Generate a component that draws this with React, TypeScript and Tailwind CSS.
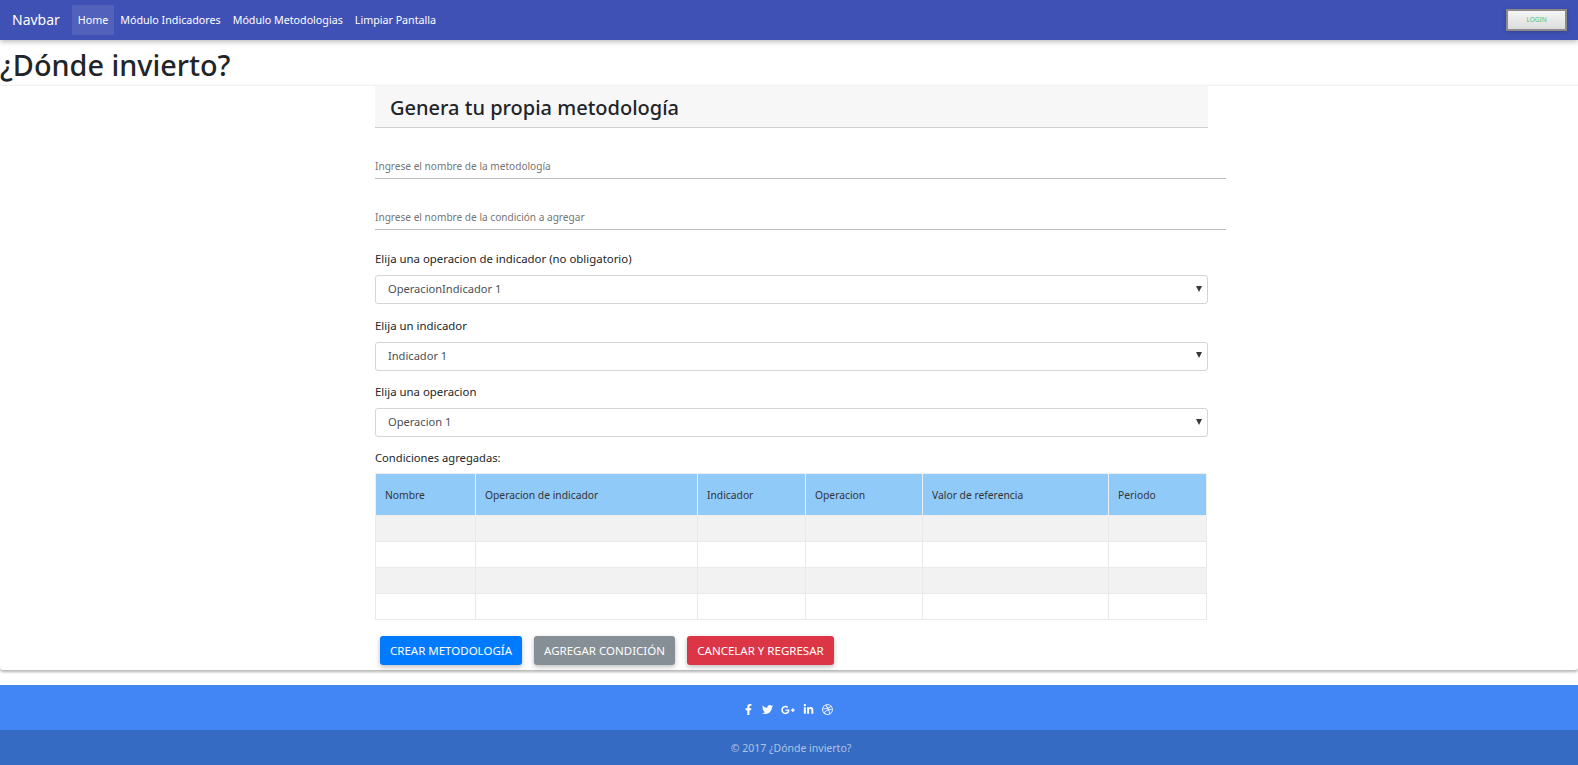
import { FaDribbble, FaFacebookF, FaGooglePlusG, FaLinkedinIn, FaTwitter } from 'react-icons/fa';

const columns = [
  { name: 'Nombre', width: 'w-[100px]' },
  { name: 'Operacion de indicador', width: 'w-[222px]' },
  { name: 'Indicador', width: 'w-[108px]' },
  { name: 'Operacion', width: 'w-[117px]' },
  { name: 'Valor de referencia', width: 'w-[186px]' },
  { name: 'Periodo', width: 'w-[98px]' },
];

const selects = [
  { label: 'Elija una operacion de indicador (no obligatorio)', value: 'OperacionIndicador 1' },
  { label: 'Elija un indicador', value: 'Indicador 1' },
  { label: 'Elija una operacion', value: 'Operacion 1' },
];

function Select({ label, value }: { label: string; value: string }) {
  return (
    <div className="mb-[4.5px] w-[833px]">
      <div className="h-[33px] pt-[8px] text-[11.4px] leading-[18px] text-[#212529]">{label}</div>
      <div className="flex h-[29px] items-center justify-between rounded-[3px] border border-[#d5d5d5] pl-[12px] pr-[5px] text-[11.1px] text-[#495057]">
        <span>{value}</span>
        <svg width="6" height="6" viewBox="0 0 6 6" className="mb-[2px]">
          <path d="M0 0h6L3 6z" fill="#343a40" />
        </svg>
      </div>
    </div>
  );
}

export default function App() {
  return (
    <div className="font-['Noto_Sans','Open_Sans',sans-serif] text-[#212529]">
      <nav className="relative z-10 flex h-10 items-center bg-[#3f51b5] pl-3 pr-[11px] text-white shadow-[0_2px_5px_rgba(0,0,0,0.26)]">
        <span className="mr-[12px] text-[14px] leading-none">Navbar</span>
        <div className="flex h-[30px] items-center text-[10.7px]">
          <a className="flex h-full items-center bg-white/10 px-[6px]">Home</a>
          <a className="flex h-full items-center px-[6px]">Módulo Indicadores</a>
          <a className="flex h-full items-center px-[6px]">Módulo Metodologias</a>
          <a className="flex h-full items-center px-[6px]">Limpiar Pantalla</a>
        </div>
        <button className="ml-auto flex h-[22px] w-[61px] items-center justify-center border-2 border-[#8a8a8a] bg-gradient-to-b from-[#f5f5f5] to-[#dcdcdc] text-[6.5px] text-[#3fc77a] shadow-[0_1px_4px_rgba(0,0,0,0.2)]">
          LOGIN
        </button>
      </nav>

      <h1 className="h-[45px] text-[28.8px] font-medium leading-[49px]">¿Dónde invierto?</h1>

      <main className="h-[585px] rounded-b-[3px] border-t border-[#f0f0f0] bg-white pl-[375px] shadow-[0_2px_3px_rgba(0,0,0,0.3)]">
        <div className="flex h-[42px] w-[833px] items-center border-b border-[#cfcfcf] bg-[#f7f7f7] pl-[15px] pt-[2px] text-[20px] font-medium">
          Genera tu propia metodología
        </div>

        <div className="mt-[29px] h-[22px] w-[851px] border-b border-[#bdbdbd] text-[10.1px] leading-[19px] text-[#757575]">
          Ingrese el nombre de la metodología
        </div>
        <div className="mt-[29px] h-[22px] w-[851px] border-b border-[#bdbdbd] text-[10.1px] leading-[19px] text-[#757575]">
          Ingrese el nombre de la condición a agregar
        </div>

        <div className="mt-[12px]">
          {selects.map((s) => (
            <Select key={s.label} label={s.label} value={s.value} />
          ))}
        </div>

        <div className="mt-[11px] h-[25px] pt-[1px] text-[11.2px] leading-[18px] text-[#212529]">Condiciones agregadas:</div>

        <table className="w-[831px] table-fixed border-collapse text-[10.3px]">
          <thead>
            <tr className="h-[42px] bg-[#90caf9]">
              {columns.map((c) => (
                <th key={c.name} className={`${c.width} border border-[#eeeeee] pl-[9px] pt-[2px] text-left font-normal text-[#333]`}>
                  {c.name}
                </th>
              ))}
            </tr>
          </thead>
          <tbody>
            {[0, 1, 2, 3].map((row) => (
              <tr key={row} className={row % 2 === 0 ? 'h-[26px] bg-[#f2f2f2]' : 'h-[26px] bg-white'}>
                {columns.map((c) => (
                  <td key={c.name} className="border border-[#e9e9e9]" />
                ))}
              </tr>
            ))}
          </tbody>
        </table>

        <div className="ml-[5px] mt-[16px] flex gap-[12px] text-[11.5px] text-white">
          <button className="h-[29px] w-[142px] rounded-[3px] bg-[#007bff] shadow-[0_2px_5px_rgba(0,0,0,0.26)]">CREAR METODOLOGÍA</button>
          <button className="h-[29px] w-[141px] rounded-[3px] bg-[#868e96] shadow-[0_2px_5px_rgba(0,0,0,0.26)]">AGREGAR CONDICIÓN</button>
          <button className="h-[29px] w-[147px] rounded-[3px] bg-[#dc3545] shadow-[0_2px_5px_rgba(0,0,0,0.26)]">CANCELAR Y REGRESAR</button>
        </div>
      </main>

      <footer className="mt-[15px]">
        <div className="flex h-[45px] items-center justify-center gap-[8px] bg-[#4285f4] pr-[3px] pt-[4px] text-[11px] text-white">
          <FaFacebookF />
          <FaTwitter />
          <FaGooglePlusG className="text-[14px]" />
          <FaLinkedinIn />
          <FaDribbble />
        </div>
        <div className="flex h-[35px] items-center justify-center bg-[#356bc3] pl-[4px] pt-[3px] text-[10.5px] text-white/60">
          © 2017 ¿Dónde invierto?
        </div>
      </footer>
    </div>
  );
}
